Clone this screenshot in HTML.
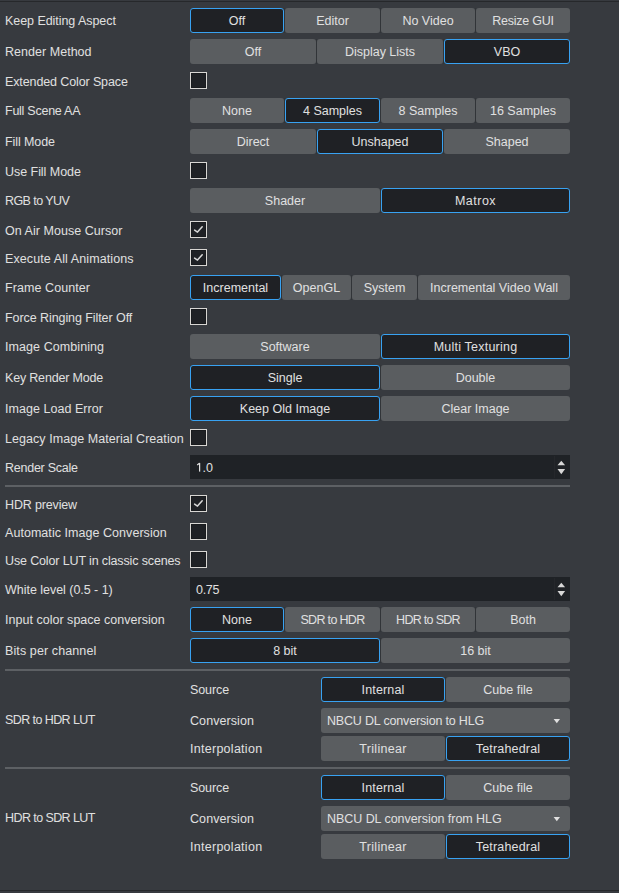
<!DOCTYPE html>
<html><head><meta charset="utf-8"><style>
html,body{margin:0;padding:0;}
body{width:619px;height:893px;background:#373a3f;position:relative;overflow:hidden;font-family:"Liberation Sans",sans-serif;font-size:12.5px;color:#e0e0e0;}
.top{position:absolute;left:0;top:1px;width:619px;height:1px;background:#26282b;}
.bot{position:absolute;left:0;top:890px;width:619px;height:1px;background:#26282b;}
.lbl{position:absolute;white-space:nowrap;}
.btn{position:absolute;box-sizing:border-box;background:#5a5d60;border-radius:3px;text-align:center;white-space:nowrap;}
.btn.sel{background:#1f2125;border:1px solid #38a2f2;}
.bt{position:absolute;text-align:center;}
.gap{position:absolute;background:#313438;}
.cb{position:absolute;box-sizing:border-box;width:17px;height:17px;border:1px solid #d8d6d3;background:#1f2125;box-shadow:inset 0 0 0 1px #191b1e;}
.spin{position:absolute;left:190px;width:380px;height:24px;background:#1f2226;}
.sv{position:absolute;left:6px;top:1px;line-height:24px;}
.sdiv{position:absolute;left:364px;top:1px;width:1px;height:22px;background:#25272b;}
.dd{position:absolute;left:321px;width:249px;height:25px;background:#5a5d60;border-radius:3px;line-height:25px;}
.dd span{position:absolute;left:6px;top:1px;}
.sep{position:absolute;left:5px;width:565px;height:2px;background:#5d6064;}
</style></head>
<body><div class="top"></div><div class="bot"></div>
<div class="lbl" style="left:5px;top:9px;height:25px;line-height:25px;letter-spacing:-0.056px">Keep Editing Aspect</div>
<div class="btn sel" style="left:190px;top:8px;width:94px;height:25px"><div class="bt" style="top:0px;left:-1px;width:94px;line-height:25px;letter-spacing:0px">Off</div></div>
<div class="gap" style="left:284px;top:8px;width:1px;height:25px"></div>
<div class="btn" style="left:285px;top:8px;width:95px;height:25px"><div class="bt" style="top:1px;left:0px;width:95px;line-height:25px;letter-spacing:0px">Editor</div></div>
<div class="gap" style="left:380px;top:8px;width:1px;height:25px"></div>
<div class="btn" style="left:381px;top:8px;width:94px;height:25px"><div class="bt" style="top:1px;left:0px;width:94px;line-height:25px;letter-spacing:0px">No Video</div></div>
<div class="gap" style="left:475px;top:8px;width:1px;height:25px"></div>
<div class="btn" style="left:476px;top:8px;width:94px;height:25px"><div class="bt" style="top:1px;left:0px;width:94px;line-height:25px;letter-spacing:-0.22px">Resize GUI</div></div>
<div class="lbl" style="left:5px;top:40px;height:25px;line-height:25px;letter-spacing:0.033px">Render Method</div>
<div class="btn" style="left:190px;top:39px;width:126px;height:25px"><div class="bt" style="top:1px;left:0px;width:126px;line-height:25px;letter-spacing:0px">Off</div></div>
<div class="gap" style="left:316px;top:39px;width:1px;height:25px"></div>
<div class="btn" style="left:317px;top:39px;width:126px;height:25px"><div class="bt" style="top:1px;left:0px;width:126px;line-height:25px;letter-spacing:0px">Display Lists</div></div>
<div class="gap" style="left:443px;top:39px;width:1px;height:25px"></div>
<div class="btn sel" style="left:444px;top:39px;width:126px;height:25px"><div class="bt" style="top:0px;left:-1px;width:126px;line-height:25px;letter-spacing:0px">VBO</div></div>
<div class="lbl" style="left:5px;top:70px;height:25px;line-height:25px;letter-spacing:-0.116px">Extended Color Space</div>
<div class="cb" style="left:190px;top:72px"></div>
<div class="lbl" style="left:5px;top:99px;height:25px;line-height:25px;letter-spacing:-0.250px">Full Scene AA</div>
<div class="btn" style="left:190px;top:98px;width:94px;height:25px"><div class="bt" style="top:1px;left:0px;width:94px;line-height:25px;letter-spacing:0px">None</div></div>
<div class="gap" style="left:284px;top:98px;width:1px;height:25px"></div>
<div class="btn sel" style="left:285px;top:98px;width:95px;height:25px"><div class="bt" style="top:0px;left:-1px;width:95px;line-height:25px;letter-spacing:0px">4 Samples</div></div>
<div class="gap" style="left:380px;top:98px;width:1px;height:25px"></div>
<div class="btn" style="left:381px;top:98px;width:94px;height:25px"><div class="bt" style="top:1px;left:0px;width:94px;line-height:25px;letter-spacing:0px">8 Samples</div></div>
<div class="gap" style="left:475px;top:98px;width:1px;height:25px"></div>
<div class="btn" style="left:476px;top:98px;width:94px;height:25px"><div class="bt" style="top:1px;left:0px;width:94px;line-height:25px;letter-spacing:0px">16 Samples</div></div>
<div class="lbl" style="left:5px;top:130px;height:25px;line-height:25px;letter-spacing:-0.087px">Fill Mode</div>
<div class="btn" style="left:190px;top:129px;width:126px;height:25px"><div class="bt" style="top:1px;left:0px;width:126px;line-height:25px;letter-spacing:0px">Direct</div></div>
<div class="gap" style="left:316px;top:129px;width:1px;height:25px"></div>
<div class="btn sel" style="left:317px;top:129px;width:126px;height:25px"><div class="bt" style="top:0px;left:-1px;width:126px;line-height:25px;letter-spacing:0px">Unshaped</div></div>
<div class="gap" style="left:443px;top:129px;width:1px;height:25px"></div>
<div class="btn" style="left:444px;top:129px;width:126px;height:25px"><div class="bt" style="top:1px;left:0px;width:126px;line-height:25px;letter-spacing:0px">Shaped</div></div>
<div class="lbl" style="left:5px;top:160px;height:25px;line-height:25px;letter-spacing:-0.042px">Use Fill Mode</div>
<div class="cb" style="left:190px;top:162px"></div>
<div class="lbl" style="left:5px;top:189px;height:25px;line-height:25px;letter-spacing:-0.578px">RGB to YUV</div>
<div class="btn" style="left:190px;top:188px;width:190px;height:25px"><div class="bt" style="top:1px;left:0px;width:190px;line-height:25px;letter-spacing:0px">Shader</div></div>
<div class="gap" style="left:380px;top:188px;width:1px;height:25px"></div>
<div class="btn sel" style="left:381px;top:188px;width:189px;height:25px"><div class="bt" style="top:0px;left:-1px;width:189px;line-height:25px;letter-spacing:0.5px">Matrox</div></div>
<div class="lbl" style="left:5px;top:219px;height:25px;line-height:25px;letter-spacing:0.044px">On Air Mouse Cursor</div>
<div class="cb" style="left:190px;top:221px"><svg width="17" height="17" style="position:absolute;left:-1px;top:-1px"><path d="M4.6 9.1 L7.5 11.1 L12.2 5.8" fill="none" stroke="#d8d8d8" stroke-width="1.5" stroke-linecap="round" stroke-linejoin="round"/></svg></div>
<div class="lbl" style="left:5px;top:247px;height:25px;line-height:25px;letter-spacing:0.100px">Execute All Animations</div>
<div class="cb" style="left:190px;top:249px"><svg width="17" height="17" style="position:absolute;left:-1px;top:-1px"><path d="M4.6 9.1 L7.5 11.1 L12.2 5.8" fill="none" stroke="#d8d8d8" stroke-width="1.5" stroke-linecap="round" stroke-linejoin="round"/></svg></div>
<div class="lbl" style="left:5px;top:276px;height:25px;line-height:25px;letter-spacing:0.075px">Frame Counter</div>
<div class="btn sel" style="left:190px;top:275px;width:91px;height:25px"><div class="bt" style="top:0px;left:-1px;width:91px;line-height:25px;letter-spacing:0px">Incremental</div></div>
<div class="gap" style="left:281px;top:275px;width:1px;height:25px"></div>
<div class="btn" style="left:282px;top:275px;width:69px;height:25px"><div class="bt" style="top:1px;left:0px;width:69px;line-height:25px;letter-spacing:0px">OpenGL</div></div>
<div class="gap" style="left:351px;top:275px;width:1px;height:25px"></div>
<div class="btn" style="left:352px;top:275px;width:65px;height:25px"><div class="bt" style="top:1px;left:0px;width:65px;line-height:25px;letter-spacing:0px">System</div></div>
<div class="gap" style="left:417px;top:275px;width:1px;height:25px"></div>
<div class="btn" style="left:418px;top:275px;width:152px;height:25px"><div class="bt" style="top:1px;left:0px;width:152px;line-height:25px;letter-spacing:0px">Incremental Video Wall</div></div>
<div class="lbl" style="left:5px;top:306px;height:25px;line-height:25px;letter-spacing:-0.074px">Force Ringing Filter Off</div>
<div class="cb" style="left:190px;top:308px"></div>
<div class="lbl" style="left:5px;top:335px;height:25px;line-height:25px;letter-spacing:0.079px">Image Combining</div>
<div class="btn" style="left:190px;top:334px;width:190px;height:25px"><div class="bt" style="top:1px;left:0px;width:190px;line-height:25px;letter-spacing:0px">Software</div></div>
<div class="gap" style="left:380px;top:334px;width:1px;height:25px"></div>
<div class="btn sel" style="left:381px;top:334px;width:189px;height:25px"><div class="bt" style="top:0px;left:-1px;width:189px;line-height:25px;letter-spacing:0.22px">Multi Texturing</div></div>
<div class="lbl" style="left:5px;top:366px;height:25px;line-height:25px;letter-spacing:-0.186px">Key Render Mode</div>
<div class="btn sel" style="left:190px;top:365px;width:190px;height:25px"><div class="bt" style="top:0px;left:-1px;width:190px;line-height:25px;letter-spacing:0px">Single</div></div>
<div class="gap" style="left:380px;top:365px;width:1px;height:25px"></div>
<div class="btn" style="left:381px;top:365px;width:189px;height:25px"><div class="bt" style="top:1px;left:0px;width:189px;line-height:25px;letter-spacing:0px">Double</div></div>
<div class="lbl" style="left:5px;top:397px;height:25px;line-height:25px;letter-spacing:0.040px">Image Load Error</div>
<div class="btn sel" style="left:190px;top:396px;width:190px;height:25px"><div class="bt" style="top:0px;left:-1px;width:190px;line-height:25px;letter-spacing:0px">Keep Old Image</div></div>
<div class="gap" style="left:380px;top:396px;width:1px;height:25px"></div>
<div class="btn" style="left:381px;top:396px;width:189px;height:25px"><div class="bt" style="top:1px;left:0px;width:189px;line-height:25px;letter-spacing:0px">Clear Image</div></div>
<div class="lbl" style="left:5px;top:427px;height:25px;line-height:25px;letter-spacing:0.052px">Legacy Image Material Creation</div>
<div class="cb" style="left:190px;top:429px"></div>
<div class="lbl" style="left:5px;top:456px;height:24px;line-height:24px;letter-spacing:-0.245px">Render Scale</div>
<div class="spin" style="top:455px"><svg width="8" height="12" style="position:absolute;left:5px;top:7px"><path d="M4.6 0.9 L4.6 9.6" stroke="#e0e0e0" stroke-width="1.25" fill="none"/><path d="M4.5 1.2 L2.2 3.0" stroke="#e0e0e0" stroke-width="1.15" fill="none"/></svg><span class="sv" style="left:12.5px">.0</span><div class="sdiv"></div><svg width="15" height="24" style="position:absolute;left:364px;top:0"><path d="M7.3 5.7 L11.1 10.2 L3.5 10.2 Z" fill="#d8d8d8"/><path d="M3.5 14.1 L11.1 14.1 L7.3 19.2 Z" fill="#d8d8d8"/></svg></div>
<div class="sep" style="top:485px"></div>
<div class="lbl" style="left:5px;top:493px;height:25px;line-height:25px;letter-spacing:-0.150px">HDR preview</div>
<div class="cb" style="left:190px;top:495px"><svg width="17" height="17" style="position:absolute;left:-1px;top:-1px"><path d="M4.6 9.1 L7.5 11.1 L12.2 5.8" fill="none" stroke="#d8d8d8" stroke-width="1.5" stroke-linecap="round" stroke-linejoin="round"/></svg></div>
<div class="lbl" style="left:5px;top:521px;height:25px;line-height:25px;letter-spacing:0.048px">Automatic Image Conversion</div>
<div class="cb" style="left:190px;top:523px"></div>
<div class="lbl" style="left:5px;top:549px;height:25px;line-height:25px;letter-spacing:-0.137px">Use Color LUT in classic scenes</div>
<div class="cb" style="left:190px;top:551px"></div>
<div class="lbl" style="left:5px;top:578px;height:24px;line-height:24px;letter-spacing:-0.030px">White level (0.5 - 1)</div>
<div class="spin" style="top:577px"><span class="sv" style="letter-spacing:-0.3px">0.75</span><div class="sdiv"></div><svg width="15" height="24" style="position:absolute;left:364px;top:0"><path d="M7.3 5.7 L11.1 10.2 L3.5 10.2 Z" fill="#d8d8d8"/><path d="M3.5 14.1 L11.1 14.1 L7.3 19.2 Z" fill="#d8d8d8"/></svg></div>
<div class="lbl" style="left:5px;top:608px;height:25px;line-height:25px;letter-spacing:0.022px">Input color space conversion</div>
<div class="btn sel" style="left:190px;top:607px;width:94px;height:25px"><div class="bt" style="top:0px;left:-1px;width:94px;line-height:25px;letter-spacing:0px">None</div></div>
<div class="gap" style="left:284px;top:607px;width:1px;height:25px"></div>
<div class="btn" style="left:285px;top:607px;width:95px;height:25px"><div class="bt" style="top:1px;left:0px;width:95px;line-height:25px;letter-spacing:-0.67px">SDR to HDR</div></div>
<div class="gap" style="left:380px;top:607px;width:1px;height:25px"></div>
<div class="btn" style="left:381px;top:607px;width:94px;height:25px"><div class="bt" style="top:1px;left:0px;width:94px;line-height:25px;letter-spacing:-0.7px">HDR to SDR</div></div>
<div class="gap" style="left:475px;top:607px;width:1px;height:25px"></div>
<div class="btn" style="left:476px;top:607px;width:94px;height:25px"><div class="bt" style="top:1px;left:0px;width:94px;line-height:25px;letter-spacing:0px">Both</div></div>
<div class="lbl" style="left:5px;top:639px;height:25px;line-height:25px;letter-spacing:0.107px">Bits per channel</div>
<div class="btn sel" style="left:190px;top:638px;width:190px;height:25px"><div class="bt" style="top:0px;left:-1px;width:190px;line-height:25px;letter-spacing:0px">8 bit</div></div>
<div class="gap" style="left:380px;top:638px;width:1px;height:25px"></div>
<div class="btn" style="left:381px;top:638px;width:189px;height:25px"><div class="bt" style="top:1px;left:0px;width:189px;line-height:25px;letter-spacing:0px">16 bit</div></div>
<div class="sep" style="top:669px"></div>
<div class="lbl" style="left:5px;top:678px;height:84px;line-height:84px;letter-spacing:-0.577px">SDR to HDR LUT</div>
<div class="lbl" style="left:190px;top:678px;height:25px;line-height:25px;letter-spacing:-0.100px">Source</div>
<div class="btn sel" style="left:321px;top:677px;width:124px;height:25px"><div class="bt" style="top:0px;left:-1px;width:124px;line-height:25px;letter-spacing:0.15px">Internal</div></div>
<div class="gap" style="left:445px;top:677px;width:1px;height:25px"></div>
<div class="btn" style="left:446px;top:677px;width:124px;height:25px"><div class="bt" style="top:1px;left:0px;width:124px;line-height:25px;letter-spacing:0px">Cube file</div></div>
<div class="lbl" style="left:190px;top:709px;height:25px;line-height:25px;letter-spacing:0.078px">Conversion</div>
<div class="dd" style="top:708px"><span style="letter-spacing:-0.175px">NBCU DL conversion to HLG</span><svg width="10" height="8" style="position:absolute;left:232px;top:10px"><path d="M0.6 1 L7.0 1 L3.8 5.2 Z" fill="#e0e0e0"/></svg></div>
<div class="lbl" style="left:190px;top:737px;height:25px;line-height:25px;letter-spacing:0.275px">Interpolation</div>
<div class="btn" style="left:321px;top:736px;width:124px;height:25px"><div class="bt" style="top:1px;left:0px;width:124px;line-height:25px;letter-spacing:0.3px">Trilinear</div></div>
<div class="gap" style="left:445px;top:736px;width:1px;height:25px"></div>
<div class="btn sel" style="left:446px;top:736px;width:124px;height:25px"><div class="bt" style="top:0px;left:-1px;width:124px;line-height:25px;letter-spacing:0.18px">Tetrahedral</div></div>
<div class="sep" style="top:767px"></div>
<div class="lbl" style="left:5px;top:776px;height:84px;line-height:84px;letter-spacing:-0.577px">HDR to SDR LUT</div>
<div class="lbl" style="left:190px;top:776px;height:25px;line-height:25px;letter-spacing:-0.100px">Source</div>
<div class="btn sel" style="left:321px;top:775px;width:124px;height:25px"><div class="bt" style="top:0px;left:-1px;width:124px;line-height:25px;letter-spacing:0.15px">Internal</div></div>
<div class="gap" style="left:445px;top:775px;width:1px;height:25px"></div>
<div class="btn" style="left:446px;top:775px;width:124px;height:25px"><div class="bt" style="top:1px;left:0px;width:124px;line-height:25px;letter-spacing:0px">Cube file</div></div>
<div class="lbl" style="left:190px;top:807px;height:25px;line-height:25px;letter-spacing:0.078px">Conversion</div>
<div class="dd" style="top:806px"><span style="letter-spacing:-0.05px">NBCU DL conversion from HLG</span><svg width="10" height="8" style="position:absolute;left:232px;top:10px"><path d="M0.6 1 L7.0 1 L3.8 5.2 Z" fill="#e0e0e0"/></svg></div>
<div class="lbl" style="left:190px;top:835px;height:25px;line-height:25px;letter-spacing:0.275px">Interpolation</div>
<div class="btn" style="left:321px;top:834px;width:124px;height:25px"><div class="bt" style="top:1px;left:0px;width:124px;line-height:25px;letter-spacing:0.3px">Trilinear</div></div>
<div class="gap" style="left:445px;top:834px;width:1px;height:25px"></div>
<div class="btn sel" style="left:446px;top:834px;width:124px;height:25px"><div class="bt" style="top:0px;left:-1px;width:124px;line-height:25px;letter-spacing:0.18px">Tetrahedral</div></div>
</body></html>
